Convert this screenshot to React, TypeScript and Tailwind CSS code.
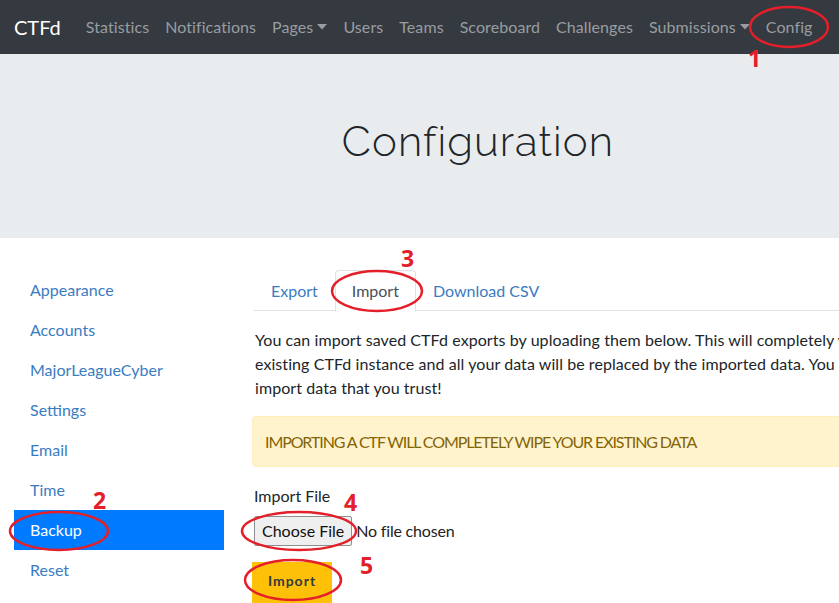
import React from "react";

const navItems: { label: string; caret?: boolean }[] = [
  { label: "Statistics" },
  { label: "Notifications" },
  { label: "Pages", caret: true },
  { label: "Users" },
  { label: "Teams" },
  { label: "Scoreboard" },
  { label: "Challenges" },
  { label: "Submissions", caret: true },
  { label: "Config" },
];

const sideItems = [
  "Appearance",
  "Accounts",
  "MajorLeagueCyber",
  "Settings",
  "Email",
  "Time",
  "Backup",
  "Reset",
];

function Caret() {
  return (
    <svg width="10" height="6" viewBox="0 0 10 6" className="ml-[4px] inline-block">
      <path d="M0 0 L10 0 L5 5.5 Z" fill="currentColor" />
    </svg>
  );
}

export default function App() {
  return (
    <div
      className="relative w-[839px] h-[603px] overflow-hidden bg-white"
      style={{ fontFamily: "Lato, 'Open Sans', sans-serif" }}
    >
      <div className="w-[956px]">
        {/* Navbar */}
        <div className="h-[54px] bg-[#343a40] flex items-center px-[14px]">
          <span className="text-white text-[20px] leading-[30px] mr-[17px]">CTFd</span>
          <div className="flex items-center">
            {navItems.map((n) => (
              <span
                key={n.label}
                className="px-[8px] text-[16px] leading-[24px] text-[#9a9da0] flex items-center tracking-[0.08px]"
              >
                {n.label}
                {n.caret && <Caret />}
              </span>
            ))}
          </div>
        </div>

        {/* Jumbotron */}
        <div className="h-[184px] bg-[#e9ecef] flex items-center justify-center pb-[8px]">
          <h1
            className="text-[42px] font-light text-[#212529] tracking-[1.1px] leading-none"
            style={{ fontFamily: "Raleway, 'Open Sans', sans-serif" }}
          >
            Configuration
          </h1>
        </div>

        {/* Body */}
        <div className="flex pt-[32px]">
          <div className="ml-[14px] w-[210px] flex flex-col">
            {sideItems.map((s) => (
              <div
                key={s}
                className={
                  "h-[40px] px-[16px] flex items-center text-[16px] " +
                  (s === "Backup" ? "bg-[#007bff] text-white" : "text-[#3a7cc2]")
                }
              >
                {s}
              </div>
            ))}
          </div>

          <div className="ml-[30px] flex-1 pr-[30px]">
            {/* Tabs */}
            <div className="flex border-b border-[#dee2e6] h-[41px]">
              <div className="px-[16px] py-[8px] leading-[24px] text-[16px] text-[#3a7cc2] border border-transparent">
                Export
              </div>
              <div className="px-[16px] py-[8px] leading-[24px] text-[16px] text-[#495057] border border-[#dee2e6] border-b-white bg-white rounded-t-[4px] h-[42px]">
                Import
              </div>
              <div className="px-[16px] py-[8px] leading-[24px] text-[16px] text-[#3a7cc2] border border-transparent">
                Download CSV
              </div>
            </div>

            <p className="mt-[17px] text-[16px] leading-[24px] text-[#212529] whitespace-nowrap ml-[1px] tracking-[0.07px]">
              You can import saved CTFd exports by uploading them below. This will completely wipe your
              <br />
              existing CTFd instance and all your data will be replaced by the imported data. You should only
              <br />
              import data that you trust!
            </p>

            <div className="mt-[16px] -ml-[2px] h-[51px] bg-[#fff3cd] border border-[#ffeeba] rounded-[4px] flex items-center pl-[12px] text-[16px] text-[#856404] uppercase tracking-[-1.1px]">
              Importing a CTF will completely wipe your existing data
            </div>

            <div className="mt-[17px] text-[16px] leading-[24px] text-[#212529]">Import File</div>
            <div className="mt-[8px] flex items-center h-[30px]">
              <div className="h-[30px] px-[7px] flex items-center bg-[#efefef] border border-[#8f8f8f] rounded-[2px] text-[16px] text-[#111]">
                Choose File
              </div>
              <span className="ml-[4px] text-[16px] text-[#222] tracking-[-0.2px]">No file chosen</span>
            </div>

            <div className="mt-[16px] -ml-[2px] w-[80px] h-[44px] bg-[#ffc107] flex items-center justify-center pb-[7px] text-[14px] font-bold tracking-[1px] text-[#343a40]">
              Import
            </div>
          </div>
        </div>
      </div>

      {/* Annotations */}
      <svg
        className="absolute left-0 top-0 pointer-events-none"
        width="839"
        height="603"
        viewBox="0 0 839 603"
      >
        <g fill="none" stroke="#e3202a" strokeWidth="2.5">
          <ellipse cx="789" cy="27" rx="39" ry="20" />
          <ellipse cx="59" cy="531" rx="49" ry="19" />
          <ellipse cx="377" cy="291" rx="45" ry="20" />
          <ellipse cx="299" cy="531" rx="57" ry="19" />
          <ellipse cx="293" cy="580" rx="48" ry="20" />
        </g>
      </svg>
      {[
        { n: "1", x: 748, y: 44 },
        { n: "2", x: 93, y: 486 },
        { n: "3", x: 401, y: 244 },
        { n: "4", x: 344, y: 488 },
        { n: "5", x: 360, y: 551 },
      ].map((a) => (
        <span
          key={a.n}
          className="absolute text-[23px] leading-[28px] font-bold text-[#e3202a]"
          style={{ left: a.x, top: a.y, fontFamily: "'Open Sans', sans-serif" }}
        >
          {a.n}
        </span>
      ))}
    </div>
  );
}
